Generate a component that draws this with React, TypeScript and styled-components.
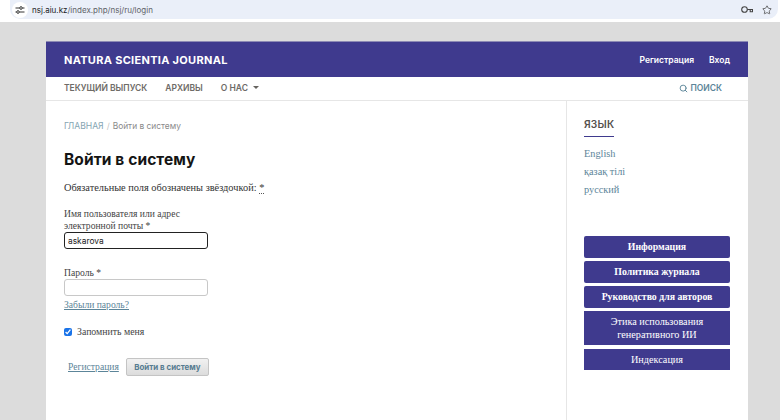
import React from "react";
import styled, { createGlobalStyle } from "styled-components";
import { Search, Star } from "lucide-react";

const sans = `Inter, "Liberation Sans", sans-serif`;
const serif = `"Liberation Serif", "DejaVu Serif", serif`;
const purple = "#3f3a8e";
const link = "#5c8599";

const GlobalStyle = createGlobalStyle`
  html, body { margin: 0; padding: 0; height: 420px; overflow: hidden; background: #dcdcdc; }
  * { box-sizing: border-box; }
`;

const Screen = styled.div`
  width: 780px;
  height: 420px;
  display: flex;
  flex-direction: column;
  overflow: hidden;
`;

const BrowserBar = styled.div`
  height: 22px;
  flex: none;
  background: #fff;
  padding: 0 2px 3px 10px;
  display: flex;
`;

const AddressPill = styled.div`
  flex: 1;
  height: 19px;
  background: #eaeff9;
  border-radius: 0 0 10px 10px;
  display: flex;
  align-items: center;
  padding: 0 6px 0 2px;
  font: 8px ${sans};
  color: #5f6368;
`;

const SiteIcon = styled.span`
  width: 16px;
  height: 16px;
  border-radius: 50%;
  background: #fff;
  display: flex;
  align-items: center;
  justify-content: center;
  margin-right: 4px;
`;

const Domain = styled.span`
  color: #202124;
`;

const PillIcons = styled.div`
  margin-left: auto;
  display: flex;
  align-items: center;
  gap: 9px;
  color: #444;
`;

const Backdrop = styled.div`
  flex: 1;
  padding: 19px 32px 0 46px;
`;

const Card = styled.div`
  height: 100%;
  background: #fff;
  display: flex;
  flex-direction: column;
`;

const Header = styled.header`
  height: 36px;
  flex: none;
  background: ${purple};
  border-top: 1px solid #8d8ab4;
  display: flex;
  align-items: center;
  justify-content: space-between;
  padding: 0 18px;
  color: #fff;
`;

const Brand = styled.div`
  font: 700 11px ${sans};
  letter-spacing: 0.3px;
`;

const UserNav = styled.div`
  display: flex;
  gap: 15px;
  font: 600 8.5px ${sans};
`;

const NavBar = styled.nav`
  height: 24px;
  flex: none;
  border-bottom: 1px solid #e6e6e6;
  display: flex;
  align-items: center;
  padding: 0 26px 1px 18px;
  gap: 18px;
  font: 600 8.5px ${sans};
  color: #6e6b67;
`;

const Caret = styled.span`
  display: inline-block;
  margin-left: 5px;
  vertical-align: 2px;
  border: 3px solid transparent;
  border-top-color: #66635f;
  border-bottom: 0;
`;

const SearchLink = styled.div`
  margin-left: auto;
  display: flex;
  align-items: center;
  gap: 2px;
  color: ${link};
`;

const Body = styled.div`
  flex: 1;
  display: flex;
`;

const Main = styled.main`
  width: 520px;
  flex: none;
  padding: 19px 18px 0;
`;

const Breadcrumb = styled.div`
  font: 400 8.4px/12px ${sans};
  color: #8a8a8a;
`;

const Crumb = styled.span`
  color: #86a5b3;
  font-size: 8.6px;
`;

const Slash = styled.span`
  color: #c4c4c4;
  margin: 0 3px;
`;

const Title = styled.h1`
  margin: 18px 0 0;
  font: 700 15.5px/20px ${sans};
  color: #141414;
  letter-spacing: 0.1px;
`;

const Note = styled.p`
  margin: 12px 0 0;
  font: 10.35px/12px ${serif};
  color: #333;
`;

const Dotted = styled.span`
  border-bottom: 1px dotted #555;
`;

const Field = styled.div<{ $top: number }>`
  margin-top: ${(p) => p.$top}px;
  width: 144px;
`;

const Label = styled.label`
  display: block;
  font: 9.6px/12px ${serif};
  color: #444;
`;

const TextInput = styled.input<{ $focus?: boolean }>`
  display: block;
  width: 144px;
  height: 17px;
  padding: 0 3px;
  margin: 0;
  font: 8.4px ${sans};
  color: #222;
  background: #fff;
  outline: none;
  border-radius: 3px;
  border: ${(p) => (p.$focus ? "1.5px solid #222" : "1px solid #c8c8c8")};
`;

const TextLink = styled.a`
  font: 9.6px/12px ${serif};
  color: ${link};
  text-decoration: underline;
`;

const ForgotRow = styled.div`
  height: 12px;
  line-height: 12px;
  margin-top: 1px;
`;

const RememberRow = styled.label`
  margin-top: 17px;
  display: flex;
  align-items: center;
  gap: 5px;
  font: 9.8px/12px ${serif};
  color: #444;
`;

const Check = styled.input`
  width: 8px;
  height: 8px;
  margin: 0;
  accent-color: #1a73e8;
`;

const Actions = styled.div`
  margin-top: 20px;
  display: flex;
  align-items: center;
  padding-left: 4px;
  gap: 7px;
`;

const SubmitButton = styled.button`
  width: 83px;
  height: 18px;
  padding: 0;
  border: 1px solid #c4c4c4;
  border-radius: 2px;
  background: linear-gradient(#f1f1f1, #dcdcdc);
  font: 700 7.9px ${sans};
  color: #557b90;
`;

const Sidebar = styled.aside`
  flex: 1;
  border-left: 1px solid #e6e6e6;
  padding: 13px 18px 0 17px;
`;

const SideTitle = styled.div`
  display: inline-block;
  font: 600 10.2px/14px ${sans};
  color: #55514d;
  padding-bottom: 5px;
  border-bottom: 1.5px solid ${purple};
  letter-spacing: 0.2px;
`;

const LangList = styled.div`
  margin-top: 8px;
  display: flex;
  flex-direction: column;
  font: 10.3px/18px ${serif};
  color: ${link};
`;

const BlockList = styled.div`
  margin-top: 37px;
  display: flex;
  flex-direction: column;
  gap: 3.5px;
`;

const BlockButton = styled.div<{ $bold?: boolean; $round?: boolean; $tall?: boolean }>`
  height: ${(p) => (p.$tall ? 34 : 21.5)}px;
  background: ${purple};
  color: #fff;
  border-radius: ${(p) => (p.$round ? 2 : 0)}px;
  display: flex;
  align-items: center;
  justify-content: center;
  text-align: center;
  padding: 0 4px;
  font: ${(p) => (p.$bold ? "700 9.8px" : "400 10.2px")}/13px ${serif};
`;

const TuneIcon = () => (
  <svg width="10" height="10" viewBox="0 0 10 10" fill="none" stroke="#333" strokeWidth="1">
    <path d="M0.5 3h4M7.5 3h2M4.5 7h5M0.5 7h1" />
    <circle cx="6" cy="3" r="1.3" />
    <circle cx="3" cy="7" r="1.3" />
  </svg>
);

const KeyIcon = () => (
  <svg width="12" height="9" viewBox="0 0 12 9" fill="none" stroke="#444" strokeWidth="1.1">
    <circle cx="3.5" cy="4.5" r="2.8" />
    <path d="M6.3 4.5h5.2v2.2H9.2V5" />
  </svg>
);

export default function App() {
  return (
    <Screen>
      <GlobalStyle />
      <BrowserBar>
        <AddressPill>
          <SiteIcon>
            <TuneIcon />
          </SiteIcon>
          <span>
            <Domain>nsj.aiu.kz</Domain>/index.php/nsj/ru/login
          </span>
          <PillIcons>
            <KeyIcon />
            <Star size={10} strokeWidth={1.8} />
          </PillIcons>
        </AddressPill>
      </BrowserBar>
      <Backdrop>
        <Card>
          <Header>
            <Brand>NATURA SCIENTIA JOURNAL</Brand>
            <UserNav>
              <span>Регистрация</span>
              <span>Вход</span>
            </UserNav>
          </Header>
          <NavBar>
            <span>ТЕКУЩИЙ ВЫПУСК</span>
            <span>АРХИВЫ</span>
            <span>
              О НАС
              <Caret />
            </span>
            <SearchLink>
              <Search size={9} strokeWidth={2.5} />
              ПОИСК
            </SearchLink>
          </NavBar>
          <Body>
            <Main>
              <Breadcrumb>
                <Crumb>ГЛАВНАЯ</Crumb>
                <Slash>/</Slash>
                Войти в систему
              </Breadcrumb>
              <Title>Войти в систему</Title>
              <Note>
                Обязательные поля обозначены звёздочкой: <Dotted>*</Dotted>
              </Note>
              <Field $top={14}>
                <Label>Имя пользователя или адрес электронной почты *</Label>
                <TextInput $focus defaultValue="askarova" />
              </Field>
              <Field $top={18}>
                <Label>Пароль *</Label>
                <TextInput type="password" />
                <ForgotRow>
                  <TextLink>Забыли пароль?</TextLink>
                </ForgotRow>
              </Field>
              <RememberRow>
                <Check type="checkbox" defaultChecked />
                Запомнить меня
              </RememberRow>
              <Actions>
                <TextLink>Регистрация</TextLink>
                <SubmitButton>Войти в систему</SubmitButton>
              </Actions>
            </Main>
            <Sidebar>
              <SideTitle>ЯЗЫК</SideTitle>
              <LangList>
                <span>English</span>
                <span>қазақ тілі</span>
                <span>русский</span>
              </LangList>
              <BlockList>
                <BlockButton $bold $round>Информация</BlockButton>
                <BlockButton $bold $round>Политика журнала</BlockButton>
                <BlockButton $bold $round>Руководство для авторов</BlockButton>
                <BlockButton $tall>Этика использования генеративного ИИ</BlockButton>
                <BlockButton>Индексация</BlockButton>
              </BlockList>
            </Sidebar>
          </Body>
        </Card>
      </Backdrop>
    </Screen>
  );
}
